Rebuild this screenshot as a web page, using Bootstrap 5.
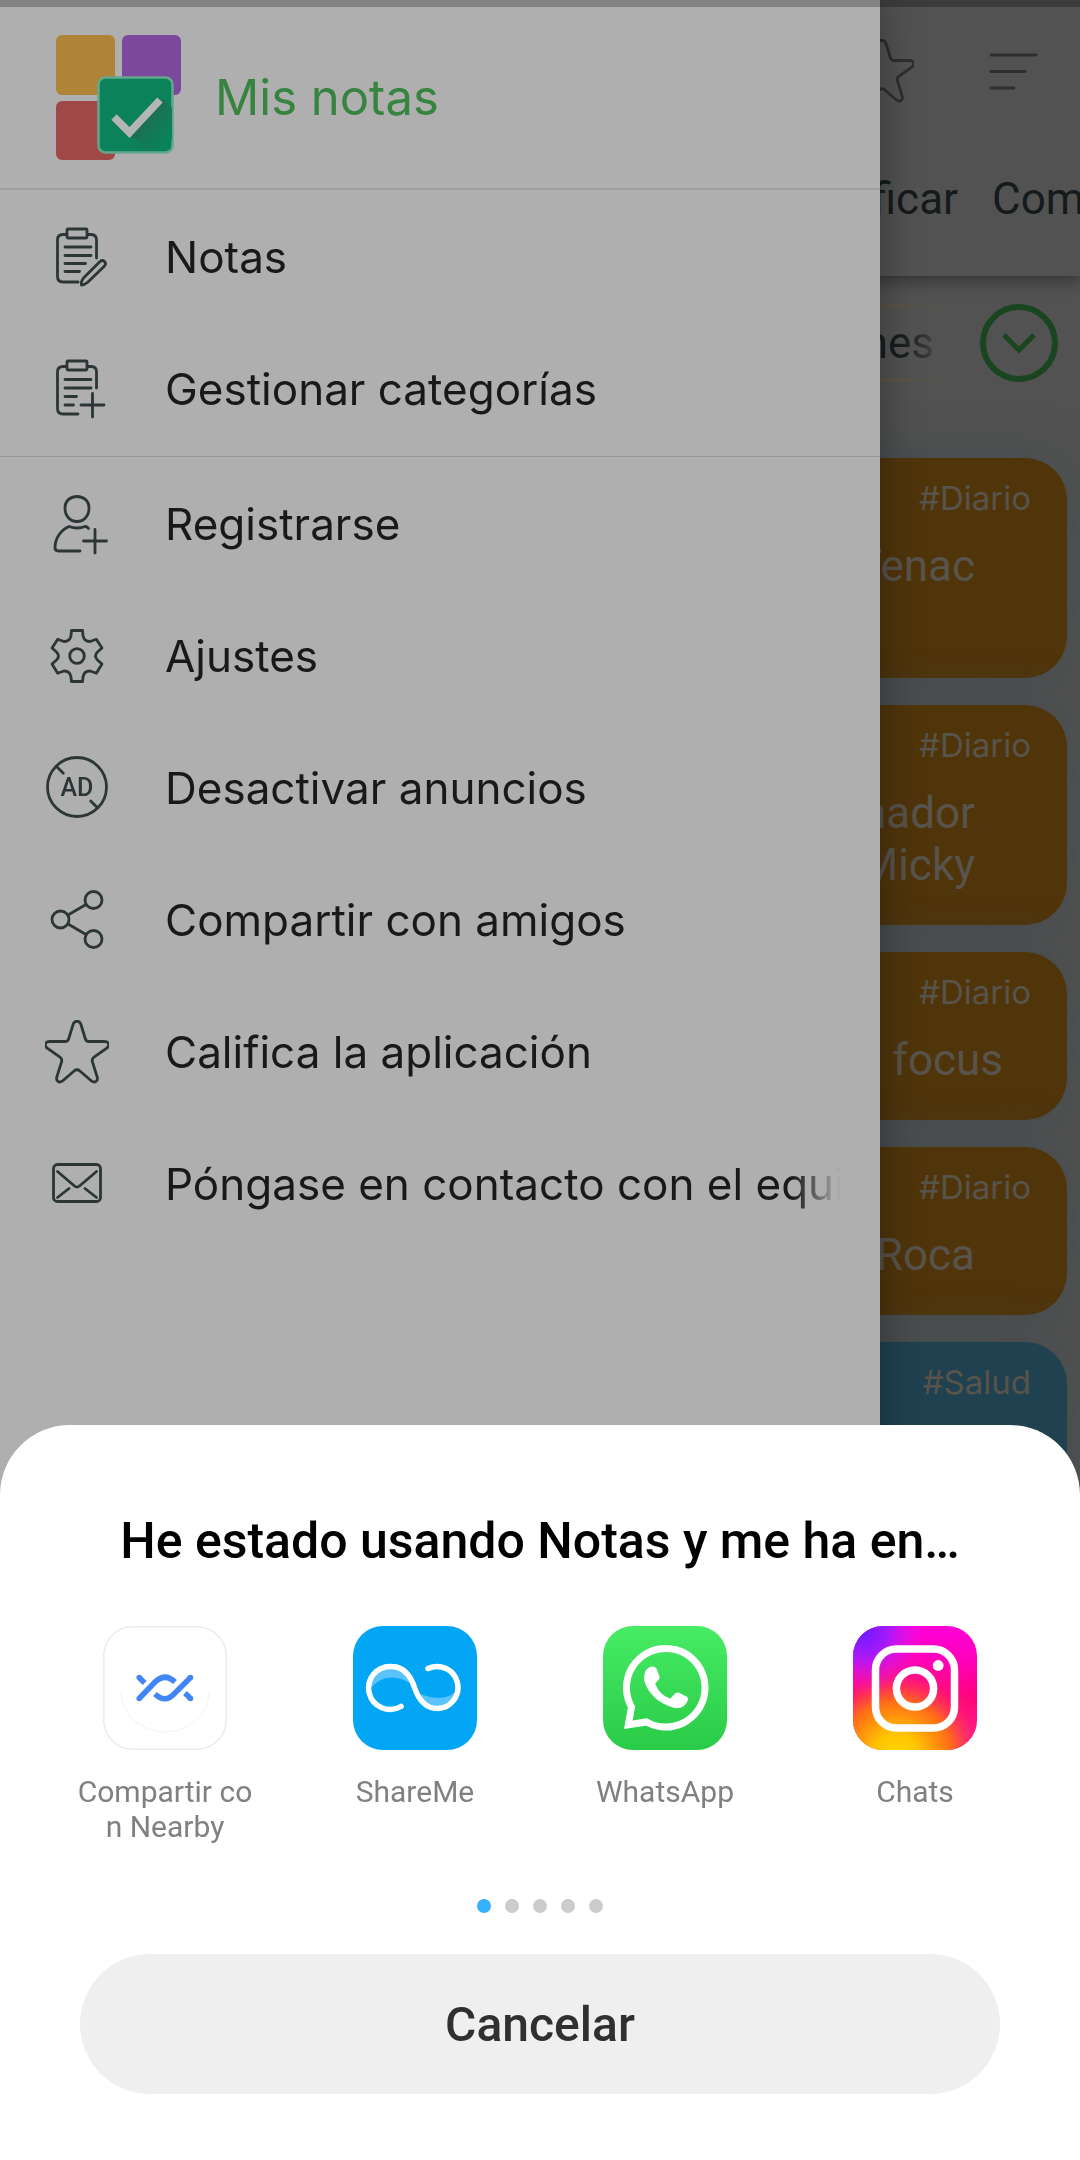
<!DOCTYPE html>
<html lang="es">
<head>
<meta charset="utf-8">
<meta name="viewport" content="width=device-width, initial-scale=1">
<title>Mis notas</title>
<link rel="stylesheet" href="https://cdn.jsdelivr.net/npm/bootstrap@5.3.0/dist/css/bootstrap.min.css">
<script src="https://cdn.jsdelivr.net/npm/bootstrap@5.3.0/dist/js/bootstrap.bundle.min.js"></script>
<style>
  body { background: #525252; font-family: Roboto, sans-serif; font-size: 44px; line-height: 52px; height: 100vh; overflow: hidden; }
  a { color: inherit; text-decoration: none; }
  .line-icon { width: 64px; height: 64px; flex: none; fill: none; stroke: #2c3637; stroke-width: 2.8; stroke-linecap: round; stroke-linejoin: round; overflow: visible; }
  .line-icon text { font: 500 25px Roboto, sans-serif; fill: #2c3637; stroke: none; }

  /* Notes screen, dimmed behind the drawer */
  .app-header { background: #525252; color: #151a1b; border-top: 7px solid #3c3c3c; height: 276px; padding: 32px 34px 0 0; box-shadow: 0 4px 16px rgba(0, 0, 0, .4); position: relative; }
  .app-header .line-icon { stroke: #2b302f; }
  .header-tools { gap: 68px; }
  .header-tabs { gap: 34px; margin: 70px -34px 0 0; white-space: nowrap; }
  .tab-cut { width: 88px; overflow: hidden; }
  .filter-row { padding: 28px 22px 76px 0; gap: 30px; }
  .filter-chip { height: 76px; line-height: 72px; padding: 0 16px 0 40px; color: #181d1f; border: 2px solid #5c5540; border-width: 2px 0; -webkit-mask-image: linear-gradient(to left, transparent, #000 48px); mask-image: linear-gradient(to left, transparent, #000 48px); }
  .expand-btn { width: 78px; height: 78px; border: 6px solid #194620; background: none; padding: 0; }
  .note-list { gap: 27px; padding: 0 13px 0 24px; }
  .note-card { background: #50350b; color: #58534b; border-radius: 42px; min-height: 168px; padding: 20px 36px 32px; box-shadow: 0 0 48px rgba(62, 72, 76, .7); text-align: right; }
  .note-card.tall { min-height: 220px; }
  .note-card.health { background: #204150; }
  .note-tag { font-family: Inter, sans-serif; font-size: 33px; line-height: 40px; }
  .note-text { padding-right: 56px; margin-top: 22px; }
  .note-text.wide { padding-right: 28px; }

  /* Drawer */
  .drawer { --bs-offcanvas-width: 880px; --bs-offcanvas-bg: #afafaf; --bs-offcanvas-border-width: 0; color: #191919; font-family: Inter, sans-serif; border-top: 7px solid #838383; box-shadow: 0 0 40px rgba(0, 0, 0, .35); max-width: 82%; transition: none; }
  .drawer-head { height: 183px; padding: 1px 56px 0; gap: 33px; border-bottom: 2px solid #9ca1a1; font-size: 49px; color: #36843f; }
  .drawer-group { padding: 1px 0; }
  .drawer-group + .drawer-group { border-top: 1px solid #8f9998; }
  .drawer-item { height: 132px; padding: 0 40px 0 45px; gap: 56px; }
  .drawer-item span { min-width: 0; flex: 1; overflow: hidden; white-space: nowrap; }
  .drawer-item .fade-end { -webkit-mask-image: linear-gradient(to left, transparent, #000 48px); mask-image: linear-gradient(to left, transparent, #000 48px); }

  /* Share sheet */
  .share-sheet { --bs-offcanvas-height: auto; --bs-offcanvas-bg: #fff; --bs-offcanvas-border-width: 0; border-radius: 70px 70px 0 0; padding: 86px 40px 66px; transition: none; z-index: 1050; }
  .sheet-title { font-size: 50px; line-height: 60px; font-weight: 500; color: #000; margin: 0 80px 55px; text-align: center; }
  .share-target { font-size: 30px; line-height: 35px; color: #808080; text-align: center; min-height: 214px; }
  .share-target svg { width: 124px; height: 124px; margin-bottom: 24px; }
  .pager { gap: 14px; margin: 55px 0 41px; }
  .pager i { width: 14px; height: 14px; background: #ccc; }
  .pager .on { background: #35b1ff; }
  .cancel-btn { background: #efefef; color: #303030; font-size: 48px; font-weight: 500; height: 140px; margin: 0 40px; border: 0; padding: 8px 0 6px; --bs-btn-hover-bg: #e4e4e4; }
</style>
</head>
<body>

<svg class="d-none" xmlns="http://www.w3.org/2000/svg">
  <symbol id="star" viewBox="0 0 64 64"><path d="M28.3 3.8C29.4.4 34.6.4 35.7 3.8L40.4 19q.8 2.5 3.2 2.5h15.8c5 0 5.4 4.4 2.4 6.600L49 37.200q-2.400 1.800-1.600 4.400l4.800 15.600c1 4-2.400 6-5.400 4L34.600 50.700q-2.600-2-5.200 0L17.200 61.200c-3 2-6.400 0-5.400-4l4.800-15.600q.8-2.600-1.600-4.400L2.200 28.100c-3-2.200-2.600-6.600 2.400-6.600h15.800q2.400 0 3.200-2.500z"/></symbol>
</svg>

<main>
  <header class="app-header">
    <div class="header-tools d-flex justify-content-end">
      <svg class="line-icon"><use href="#star"/></svg>
      <svg class="line-icon" viewBox="0 0 64 64"><path d="M9 16h45M9 32.500h34M9 49h23"/></svg>
    </div>
    <nav class="header-tabs d-flex justify-content-end">
      <a href="#">Clasificar</a>
      <a href="#" class="tab-cut">Compartir</a>
    </nav>
  </header>

  <div class="filter-row d-flex justify-content-end align-items-center">
    <span class="filter-chip">Vacaciones</span>
    <button class="expand-btn rounded-circle d-flex align-items-center justify-content-center" type="button" aria-label="Desplegar">
      <svg width="36" height="24" viewBox="0 0 36 24" fill="none" stroke="#194620" stroke-width="5"><path d="M3 4l15 15L33 4"/></svg>
    </button>
  </div>

  <section class="note-list d-flex flex-column">
    <article class="note-card tall"><div class="note-tag">#Diario</div><div class="note-text">Tenac</div></article>
    <article class="note-card tall"><div class="note-tag">#Diario</div><div class="note-text">Ordenador<br>Micky</div></article>
    <article class="note-card"><div class="note-tag">#Diario</div><div class="note-text wide">Modo focus</div></article>
    <article class="note-card"><div class="note-tag">#Diario</div><div class="note-text">Roca</div></article>
    <article class="note-card tall health"><div class="note-tag">#Salud</div></article>
  </section>
</main>

<aside class="drawer offcanvas offcanvas-start show" tabindex="-1" data-bs-backdrop="false" data-bs-scroll="true">
  <div class="drawer-head d-flex align-items-center">
    <svg class="flex-shrink-0" width="126" height="126" viewBox="0 0 126 126">
      <defs><linearGradient id="checkShade" x1="0" y1="0" x2="1" y2="1"><stop offset=".3" stop-color="#1f6b50"/><stop offset=".8" stop-color="#0b8259"/></linearGradient></defs>
      <rect width="59" height="60" rx="6" fill="#b08436"/>
      <rect x="66" width="59" height="60" rx="6" fill="#7b489e"/>
      <rect y="66" width="59" height="59" rx="6" fill="#a04848"/>
      <rect x="42.500" y="42.500" width="74" height="75" rx="7" fill="#0b8259" stroke="#64a68c" stroke-width="2.500"/>
      <path d="M74 99l33-35 9 9v30q-1 12-12 13H91z" fill="url(#checkShade)"/>
      <path d="M58 82l15.500 15.500L104 65" fill="none" stroke="#b4b5b5" stroke-width="7.500" stroke-linejoin="miter"/>
    </svg>
    <span>Mis notas</span>
  </div>
  <nav class="drawer-group">
    <a href="#" class="drawer-item d-flex align-items-center">
      <svg class="line-icon" viewBox="0 0 64 64"><rect x="22" y="4" width="20" height="9" rx="1"/><path d="M21 9.500h-3q-5.500 0-5.500 5.500v36.500q0 5.500 5.500 5.500h15M43 9.500h3q5.500 0 5.500 5.500v18M20 22h26M20 30.500h26M20 38.500h20.500M20 46.500h14.500M36.500 60q-1-3 2-7L55 36.500q2.500-2 4.500 0t0 4.500L43 57q-3.500 3-6.500 3z"/></svg>
      <span>Notas</span></a>
    <a href="#" class="drawer-item d-flex align-items-center">
      <svg class="line-icon" viewBox="0 0 64 64"><rect x="22" y="4" width="20" height="9" rx="1"/><path d="M21 9.500h-3q-5.500 0-5.500 5.500v36.500q0 5.500 5.500 5.500h15M43 9.500h3q5.500 0 5.500 5.500v16M20 22.500h26M20 31h26M20 39.500h11.500M20 48h8.500M36 48h23M47.500 36.500V60"/></svg>
      <span>Gestionar categorías</span></a>
  </nav>
  <nav class="drawer-group">
    <a href="#" class="drawer-item d-flex align-items-center">
      <svg class="line-icon" viewBox="0 0 64 64"><path d="M32 4.500c7 0 12 4.500 12 11.500 0 8-5 13.500-12 13.500S20 24 20 16C20 9 25 4.500 32 4.500zM35 59H13.500Q10 59 10 55.500C10 46 16 38 24 34.500q8 3 16 0 2 0 3.500 1.800M38.500 49h23M50 37.500V61"/></svg>
      <span>Registrarse</span></a>
    <a href="#" class="drawer-item d-flex align-items-center">
      <svg class="line-icon" viewBox="0 0 64 64"><circle cx="32" cy="32" r="7.300"/><path d="M26.500 6.500h11l.6 5.500c.7 3.500 3.500 5.600 7 5.500l6.200-2.300L57 24l-4.500 4q-4 4 0 8l4.500 4-5.700 9.300-6.200-2.300c-3.500-.1-6.300 2-7 5.500l-.6 5H26.500l-.6-5c-.7-3.500-3.500-5.600-7-5.500l-6.200 2.300L7 40l4.500-4q4-4 0-8L7 24l5.700-8.800 6.200 2.300c3.500.1 6.300-2 7-5.500z"/></svg>
      <span>Ajustes</span></a>
    <a href="#" class="drawer-item d-flex align-items-center">
      <svg class="line-icon" viewBox="0 0 64 64"><circle cx="32" cy="31" r="29.500"/><path d="M11.500 10.500l6.800 6.800M45.700 45l6.800 6.800"/><text x="32" y="40" text-anchor="middle">AD</text></svg>
      <span>Desactivar anuncios</span></a>
    <a href="#" class="drawer-item d-flex align-items-center">
      <svg class="line-icon" viewBox="0 0 64 64"><circle cx="15.500" cy="31.500" r="8.500"/><circle cx="48.500" cy="12" r="8.500"/><circle cx="48.500" cy="51" r="8.500"/><path d="M23 27l18-10.500M23 36l18 10.500"/></svg>
      <span>Compartir con amigos</span></a>
    <a href="#" class="drawer-item d-flex align-items-center">
      <svg class="line-icon"><use href="#star"/></svg>
      <span>Califica la aplicación</span></a>
    <a href="#" class="drawer-item d-flex align-items-center">
      <svg class="line-icon" viewBox="0 0 64 64"><rect x="8.500" y="12.500" width="47" height="37" rx="4"/><path d="M12.500 19.500L29.500 34q2.500 2 5 0l17-14.500M24 36.500l-11.500 9M40 36.500l11.500 9"/></svg>
      <span class="fade-end">Póngase en contacto con el equipo</span></a>
  </nav>
</aside>

<section class="share-sheet offcanvas offcanvas-bottom show" tabindex="-1" data-bs-backdrop="false" data-bs-scroll="true">
  <h1 class="sheet-title text-truncate">He estado usando Notas y me ha en…</h1>
  <div class="row g-0">
    <a href="#" class="share-target col-3 d-flex flex-column align-items-center">
      <svg viewBox="0 0 124 124">
        <rect x=".75" y=".75" width="122.500" height="122.500" rx="29" fill="#fff" stroke="#ebebeb" stroke-width="1.500"/>
        <path d="M18 66a44 40 0 0 0 88 0" fill="none" stroke="#f3f3f3"/>
        <g fill="none" stroke="#4285f4" stroke-width="5.500"><path d="M36.200 51.500l5.500 5.500M82 67l5.500 5.500" /><path d="M36.200 72.500L52 56q10-9.500 20 0M52 68q10 9.500 19 0l16.500-16.500"/></g>
        <g fill="#4285f4"><circle cx="36.200" cy="51.500" r="2.750"/><circle cx="36.200" cy="72.500" r="2.750"/><circle cx="87.500" cy="51.500" r="2.750"/><circle cx="87.500" cy="72.500" r="2.750"/></g>
      </svg>
      <span>Compartir co<br>n Nearby</span></a>
    <a href="#" class="share-target col-3 d-flex flex-column align-items-center">
      <svg viewBox="0 0 124 124">
        <rect width="124" height="124" rx="30" fill="#03a5f5"/>
        <path d="M18 62c0-13 9-21.500 20.500-21.500 12 0 18 8 21.500 19-12-10-31-12-42 2.500zM105.500 61c0 13-9 21.500-20.500 21.500-12 0-18-8-21.500-16 14 6 34 10 42-5.500z" fill="#5ac4fa"/>
        <path d="M48 80.500A21.500 21.500 0 1 1 38.500 40.500C50 40.500 57 48 61.500 61.500C66 75 73 82.500 84.500 82.500A21 21 0 1 0 75 42.500" fill="none" stroke="#fff" stroke-width="5.500" stroke-linecap="round"/>
      </svg>
      <span>ShareMe</span></a>
    <a href="#" class="share-target col-3 d-flex flex-column align-items-center">
      <svg viewBox="0 0 124 124">
        <defs><linearGradient id="wa" x2="0" y2="1"><stop stop-color="#48eb64"/><stop offset="1" stop-color="#29cb47"/></linearGradient></defs>
        <rect width="124" height="124" rx="30" fill="url(#wa)"/>
        <path d="M28.500 81A39.300 39.300 0 1 1 43.500 96l-18.200 2.800z" fill="none" stroke="#fff" stroke-width="7"/>
        <path d="M46 41.500q5-2.500 7.500 1l3 8q.5 2-1 3.500l-3.300 3.500C55 65 60 70 67.500 72.500l4.500-5q1.500-1.500 3.500-1l8 4q2 1 1.500 3C83 81 76 83.500 70 81.500 56 77.500 46 68 42 57c-2-6-.5-13 4-15.500z" fill="#fff"/>
      </svg>
      <span>WhatsApp</span></a>
    <a href="#" class="share-target col-3 d-flex flex-column align-items-center">
      <svg viewBox="0 0 124 124">
        <defs>
          <radialGradient id="igWarm" cx=".35" cy="1.050" r=".9"><stop stop-color="#ffd800"/><stop offset=".2" stop-color="#ffc400"/><stop offset=".5" stop-color="#ff6a18"/><stop offset=".72" stop-color="#ff1a78" stop-opacity=".6"/><stop offset="1" stop-color="#ff00c8" stop-opacity="0"/></radialGradient>
          <radialGradient id="igCool" cx=".08" cy=".04" r=".5"><stop stop-color="#6a1cff"/><stop offset=".4" stop-color="#9a1cff" stop-opacity=".9"/><stop offset="1" stop-color="#e81cf0" stop-opacity="0"/></radialGradient>
          <linearGradient id="igBase" x2="0" y2="1"><stop stop-color="#ff00d8"/><stop offset=".3" stop-color="#ff00b8"/><stop offset=".6" stop-color="#ff0068"/><stop offset="1" stop-color="#f82ea0"/></linearGradient>
        </defs>
        <rect width="124" height="124" rx="30" fill="url(#igBase)"/><rect width="124" height="124" rx="30" fill="url(#igWarm)"/><rect width="124" height="124" rx="30" fill="url(#igCool)"/>
        <g fill="none" stroke="#fff" stroke-width="7.500"><rect x="22.500" y="23" width="79" height="79" rx="21"/><circle cx="62" cy="62.500" r="18.600"/></g><circle cx="85.200" cy="39.500" r="5.400" fill="#fff"/>
      </svg>
      <span>Chats</span></a>
  </div>
  <div class="pager d-flex justify-content-center"><i class="on rounded-circle"></i><i class="rounded-circle"></i><i class="rounded-circle"></i><i class="rounded-circle"></i><i class="rounded-circle"></i></div>
  <button class="cancel-btn btn rounded-pill" type="button">Cancelar</button>
</section>

</body>
</html>
